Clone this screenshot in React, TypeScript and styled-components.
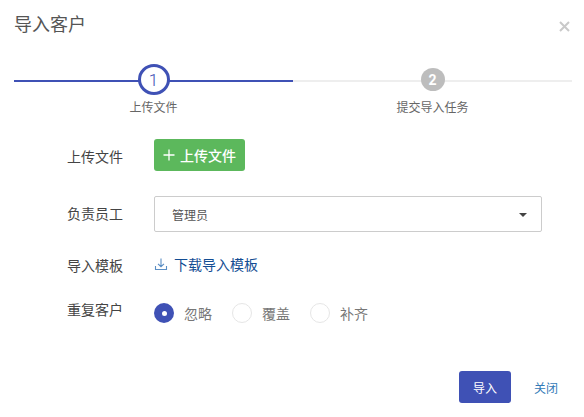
import React from 'react'
import styled, { createGlobalStyle } from 'styled-components'

const GlobalStyle = createGlobalStyle`
  html, body {
    margin: 0;
    padding: 0;
    background: #fff;
    font-family: "Liberation Sans", "Noto Sans CJK SC", sans-serif;
  }
`
const Dialog = styled.div`
  width: 584px;
  height: 417px;
  box-sizing: border-box;
  padding: 0 12px 0 14px;
  overflow: hidden;
`
const Header = styled.div`
  display: flex;
  justify-content: space-between;
  height: 64px;
  padding-top: 14px;
  box-sizing: border-box;
`
const Title = styled.div`
  font-size: 18px;
  line-height: 22px;
  color: #555;
`
const CloseIcon = styled.svg`
  width: 11px;
  height: 11px;
  margin-top: 7px;
  margin-right: 2px;
  stroke: #c9c9c9;
  stroke-width: 2;
`
const Steps = styled.div`
  display: flex;
`
const Step = styled.div`
  position: relative;
  flex: 1;
  height: 52px;
  display: flex;
  flex-direction: column;
  align-items: center;
  &::before {
    content: '';
    position: absolute;
    left: 0;
    right: 0;
    top: 16px;
    height: 2px;
    background: ${(p: { $active?: boolean }) => (p.$active ? '#3f51b5' : '#eeeeee')};
  }
`
const Bubble = styled.div<{ $active?: boolean }>`
  position: relative;
  box-sizing: border-box;
  display: flex;
  align-items: center;
  justify-content: center;
  width: ${(p) => (p.$active ? 32 : 24)}px;
  height: ${(p) => (p.$active ? 32 : 24)}px;
  margin: ${(p) => (p.$active ? 0 : 4)}px 0 ${(p) => (p.$active ? 5 : 9)}px;
  border-radius: 50%;
  border: ${(p) => (p.$active ? '3px solid #3f51b5' : 'none')};
  background: ${(p) => (p.$active ? '#fff' : '#bdbdbd')};
  color: ${(p) => (p.$active ? '#3f51b5' : '#fff')};
  font-family: Roboto, sans-serif;
  font-size: ${(p) => (p.$active ? 17 : 14)}px;
  font-weight: ${(p) => (p.$active ? 300 : 700)};
`
const StepLabel = styled.div`
  font-size: 12px;
  line-height: 16px;
  color: #666;
`
const Form = styled.div`
  display: flex;
  flex-direction: column;
  margin-top: 23px;
`
const Row = styled.div<{ $height: number; $gap: number }>`
  display: grid;
  grid-template-columns: 140px 388px;
  grid-template-rows: 100%;
  align-items: center;
  height: ${(p) => p.$height}px;
  margin-bottom: ${(p) => p.$gap}px;
`
const Label = styled.div<{ $top?: number; $bottom?: number }>`
  padding: ${(p) => p.$top ?? 0}px 0 ${(p) => p.$bottom ?? 0}px 53px;
  font-size: 14px;
  line-height: 20px;
  color: #444;
`
const UploadButton = styled.button`
  display: flex;
  align-items: center;
  justify-content: center;
  gap: 5px;
  width: 91px;
  height: 32px;
  padding: 0;
  border: none;
  border-radius: 3px;
  background: #5cb85c;
  color: #fff;
  font: inherit;
  font-size: 14px;
  font-weight: 500;
`
const Select = styled.div`
  display: flex;
  align-items: center;
  justify-content: space-between;
  box-sizing: border-box;
  height: 36px;
  padding: 0 14px 0 17px;
  border: 1px solid #ccc;
  border-radius: 2px;
  font-size: 12px;
  color: #555;
`
const Caret = styled.span`
  width: 0;
  height: 0;
  margin-top: 1px;
  border-left: 4px solid transparent;
  border-right: 4px solid transparent;
  border-top: 4px solid #444;
`
const DownloadLink = styled.a`
  display: flex;
  align-items: center;
  gap: 6px;
  padding-bottom: 2px;
  font-size: 14px;
  color: #134d93;
  text-decoration: none;
`
const Radios = styled.div`
  display: flex;
  align-items: center;
`
const Radio = styled.span<{ $checked?: boolean }>`
  box-sizing: border-box;
  display: flex;
  align-items: center;
  justify-content: center;
  width: 20px;
  height: 20px;
  border-radius: 50%;
  border: ${(p) => (p.$checked ? 'none' : '1px solid #e6e6e6')};
  background: ${(p) => (p.$checked ? '#3f51b5' : '#fff')};
  &::after {
    content: '';
    display: ${(p) => (p.$checked ? 'block' : 'none')};
    width: 5px;
    height: 5px;
    border-radius: 50%;
    background: #fff;
  }
`
const RadioText = styled.span`
  width: 48px;
  margin-left: 10px;
  font-size: 14px;
  color: #777;
`
const Footer = styled.div`
  display: flex;
  justify-content: flex-end;
  align-items: center;
  gap: 23px;
  margin-top: 48px;
  padding-right: 14px;
`
const SubmitButton = styled.button`
  width: 52px;
  height: 32px;
  padding: 0;
  border: none;
  border-radius: 3px;
  background: #3f51b5;
  color: #fff;
  font: inherit;
  font-size: 12px;
`
const CloseLink = styled.a`
  font-size: 12px;
  color: #337ab7;
`

const App = () => {
  return (
    <Dialog>
      <GlobalStyle />
      <Header>
        <Title>导入客户</Title>
        <CloseIcon viewBox="0 0 11 11">
          <path d="M1 1 L10 10 M10 1 L1 10" />
        </CloseIcon>
      </Header>
      <Steps>
        <Step $active>
          <Bubble $active>1</Bubble>
          <StepLabel>上传文件</StepLabel>
        </Step>
        <Step>
          <Bubble>2</Bubble>
          <StepLabel>提交导入任务</StepLabel>
        </Step>
      </Steps>
      <Form>
        <Row $height={32} $gap={25}>
          <Label $top={4}>上传文件</Label>
          <UploadButton>
            <svg width="12" height="12" viewBox="0 0 12 12" stroke="#fff" strokeWidth="1.3">
              <path d="M6 0.5 V11.5 M0.5 6 H11.5" />
            </svg>
            上传文件
          </UploadButton>
        </Row>
        <Row $height={36} $gap={17}>
          <Label>负责员工</Label>
          <Select>
            管理员
            <Caret />
          </Select>
        </Row>
        <Row $height={32} $gap={22}>
          <Label $top={2}>导入模板</Label>
          <DownloadLink href="#">
            <svg width="14" height="14" viewBox="0 0 14 14" fill="none" stroke="#5b8ec4" strokeWidth="1.1">
              <path d="M7 1.5 V9.5 M4 6.8 L7 9.7 L10 6.8 M1.5 9 V12.5 H12.5 V9" />
            </svg>
            下载导入模板
          </DownloadLink>
        </Row>
        <Row $height={20} $gap={0}>
          <Label $bottom={6}>重复客户</Label>
          <Radios>
            <Radio $checked />
            <RadioText>忽略</RadioText>
            <Radio />
            <RadioText>覆盖</RadioText>
            <Radio />
            <RadioText>补齐</RadioText>
          </Radios>
        </Row>
      </Form>
      <Footer>
        <SubmitButton>导入</SubmitButton>
        <CloseLink>关闭</CloseLink>
      </Footer>
    </Dialog>
  )
}

export default App
